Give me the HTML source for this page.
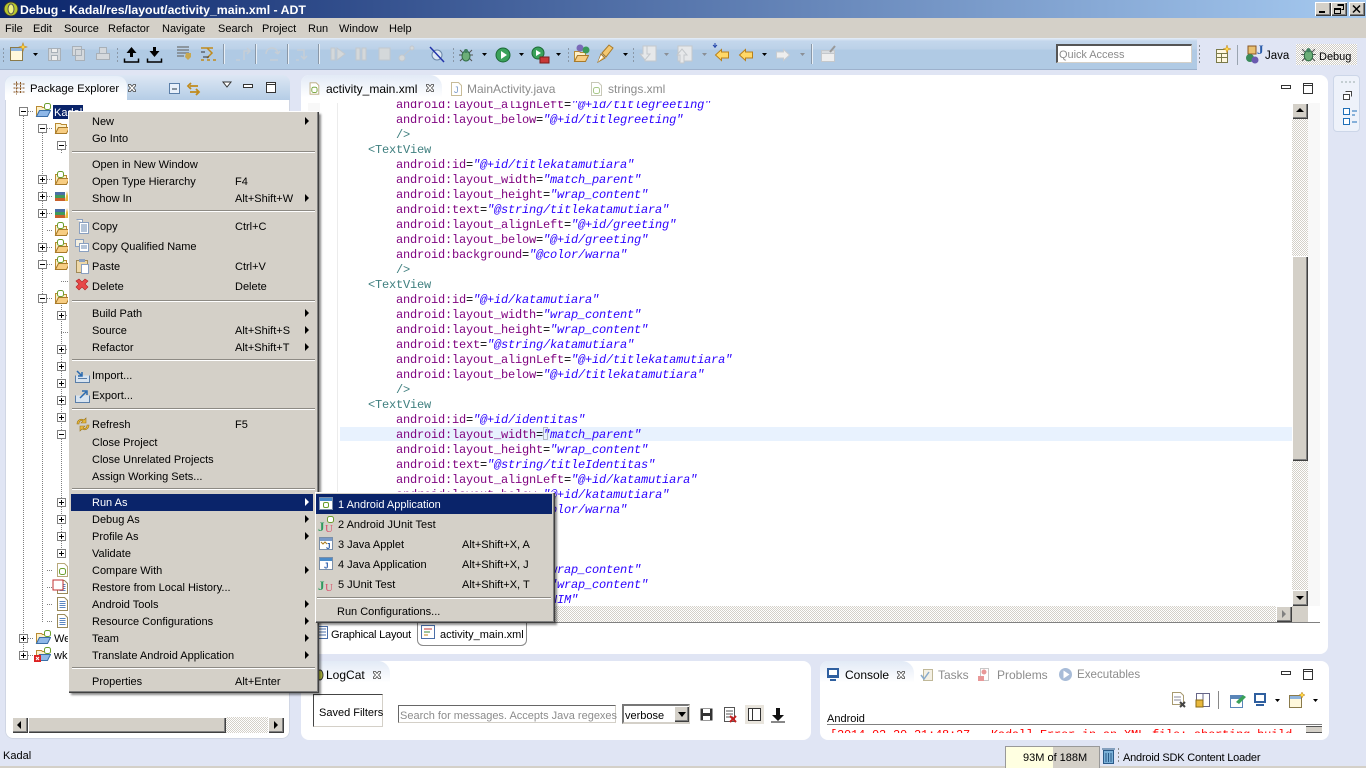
<!DOCTYPE html>
<html><head><meta charset="utf-8"><title>Debug - Kadal/res/layout/activity_main.xml - ADT</title>
<style>
html,body{margin:0;padding:0;width:1366px;height:768px;overflow:hidden;background:#e0e5f4;font-family:"Liberation Sans",sans-serif;font-size:11px;color:#000}
div,svg,span.a{position:absolute}
.t{position:absolute;white-space:nowrap;line-height:16px;height:16px;margin-top:1px}
.g{color:#8c8c8c}
.btn{background:#d4d0c8;box-shadow:inset 1px 1px #fff,inset -1px -1px #404040,inset -2px -2px #808080}
.chk{background:repeating-conic-gradient(#d4d0c8 0 25%,#fff 0 50%) 0 0/2px 2px}
.pan{background:#fff;border-radius:8px}
.sep{height:1px;background:#8d8a84;border-bottom:1px solid #fff;left:72px;width:243px}
.ar{width:0;height:0;border-left:4px solid #000;border-top:4px solid transparent;border-bottom:4px solid transparent;left:305px}
#code{left:340px;top:101px;width:952px;height:505px;overflow:hidden;font-family:"Liberation Mono",monospace;font-size:12px;letter-spacing:-.2px;line-height:15px;color:#000}
#code b{font-weight:normal;color:#7f007f}
#code i{color:#2a00ff}
#code u{text-decoration:none;color:#3f7f7f}
#code p{margin:0;height:15px;padding-left:56px;white-space:pre}
#code p.tag{padding-left:28px}
</style></head><body>

<svg width="0" height="0" style="position:absolute"><defs>
<symbol id="plus" viewBox="0 0 9 9"><rect x=".5" y=".5" width="8" height="8" fill="#fff" stroke="#808080"/><path d="M2 4.500h5M4.500 2v5" stroke="#000" fill="none"/></symbol>
<symbol id="minus" viewBox="0 0 9 9"><rect x=".5" y=".5" width="8" height="8" fill="#fff" stroke="#808080"/><path d="M2 4.500h5" stroke="#000" fill="none"/></symbol>
<symbol id="folder" viewBox="0 0 16 16"><path d="M1.500 3.500h5l1 1h5v3h-8l-3 6z" fill="#fdf0c8" stroke="#b98a32"/><path d="M1.500 13.500 4.500 7.500H15.500l-3 6z" fill="#f7cd82" stroke="#a87a2a"/></symbol>
<symbol id="pfolder" viewBox="0 0 16 16"><path d="M1.500 3.500h5l1 1h5v3h-8l-3 6z" fill="#fdf0c8" stroke="#b98a32"/><path d="M1.500 13.500 4.500 7.500H15.500l-3 6z" fill="#8fb8e8" stroke="#3a6ea8"/><rect x="9.500" y=".5" width="6" height="6" rx="2" fill="#fff" stroke="#6a9e2d"/></symbol>
<symbol id="afolder" viewBox="0 0 16 16"><path d="M1.500 3.500h5l1 1h5v3h-8l-3 6z" fill="#fdf0c8" stroke="#b98a32"/><path d="M1.500 13.500 4.500 7.500H15.500l-3 6z" fill="#f7cd82" stroke="#a87a2a"/><rect x="3.500" y=".5" width="6" height="6" rx="2" fill="#fff" stroke="#6a9e2d"/></symbol>
<symbol id="libs" viewBox="0 0 16 16"><rect x="1" y="4" width="10" height="3" fill="#4a6fa5"/><rect x="1" y="7" width="10" height="3" fill="#3f9a5a"/><rect x="1" y="10" width="10" height="3" fill="#c8602c"/><path d="M11 13 13 3l2 10z" fill="#e8b83c"/></symbol>
<symbol id="doc" viewBox="0 0 16 16"><path d="M3.500 1.500h7l3 3v10h-10z" fill="#fff" stroke="#9a8a5a"/><path d="M5.500 5.500h6M5.500 7.500h6M5.500 9.500h6M5.500 11.500h6" stroke="#5a86c0"/></symbol>
<symbol id="adoc" viewBox="0 0 16 16"><path d="M3.500 1.500h7l3 3v10h-10z" fill="#fff" stroke="#b8a87a"/><rect x="5.500" y="6.500" width="6" height="6" rx="2" fill="#fff" stroke="#6a9e2d"/></symbol>
<symbol id="drop" viewBox="0 0 7 4"><path d="M1 0h5L3.500 3z" fill="#000"/></symbol>
<symbol id="dropg" viewBox="0 0 7 4"><path d="M1 0h5L3.500 3z" fill="#8a8f96"/></symbol>
<symbol id="bug" viewBox="0 0 16 16"><path d="M2 3l3 3M14 3l-3 3M1 8h3M15 8h-3M2 14l3-3M14 14l-3-3" stroke="#555" fill="none"/><ellipse cx="8" cy="9" rx="4" ry="5" fill="#6cae78" stroke="#2f6b44"/><circle cx="8" cy="4" r="2" fill="#3f7f5f"/></symbol>
<symbol id="play" viewBox="0 0 16 16"><circle cx="8" cy="8" r="7" fill="#3aa15a" stroke="#1c6a36"/><path d="M6 4l6 4-6 4z" fill="#fff"/></symbol>
<symbol id="lback" viewBox="0 0 16 16"><path d="M7.500 2.500 1.500 8l6 5.500V11h7V5h-7z" fill="#ffd868" stroke="#b8801c"/></symbol>
<symbol id="rgray" viewBox="0 0 16 16"><path d="M8.500 2.500l6 5.500-6 5.500V11h-7V5h7z" fill="#eee" stroke="#c8ccd0"/></symbol>
<symbol id="min" viewBox="0 0 12 12"><rect x="1.500" y="3.500" width="9" height="3" fill="#fff" stroke="#333"/></symbol>
<symbol id="max" viewBox="0 0 12 12"><rect x="1.500" y=".5" width="9" height="10" fill="#fff" stroke="#333"/><path d="M1.500 2.500h9" stroke="#333"/></symbol>
<symbol id="x" viewBox="0 0 10 10"><path d="M1.500 1.500h2l1.500 2 1.500-2h2v1.500L6.500 5l2 2v1.500h-2L5 6.500l-1.500 2h-2V7l2-2-2-2z" fill="#fff" stroke="#444" stroke-width=".8"/></symbol>
<symbol id="app" viewBox="0 0 16 16"><rect x="1.500" y="1.500" width="13" height="12" fill="#fff" stroke="#7a8ea8"/><rect x="2" y="2" width="12" height="3" fill="#4a8ac8"/><rect x="5.500" y="6.500" width="5" height="5" rx="1.500" fill="#fff" stroke="#6a9e2d"/></symbol>
<symbol id="ju" viewBox="0 0 16 16"><text x="0" y="14" font-family="Liberation Serif" font-size="13" font-weight="bold" fill="#2f9a5f">J</text><text x="7" y="15" font-family="Liberation Serif" font-size="11" fill="#d8506a">U</text></symbol>
</defs></svg>

<!-- title bar -->
<div style="left:0;top:0;width:1366px;height:18px;background:linear-gradient(90deg,#0a246a,#a6caf0)"></div>
<svg style="left:3px;top:1px" width="16" height="16"><circle cx="8" cy="8" r="7" fill="#b8c82c" stroke="#333"/><ellipse cx="8" cy="8" rx="3" ry="5" fill="#f0f080" stroke="#555"/></svg>
<div class="t" style="left:20px;top:1px;color:#fff;font-weight:bold;font-size:12.300px">Debug - Kadal/res/layout/activity_main.xml - ADT</div>
<div class="btn" style="left:1315px;top:2px;width:16px;height:14px"></div><div style="left:1319px;top:11px;width:6px;height:2px;background:#000"></div>
<div class="btn" style="left:1331px;top:2px;width:16px;height:14px"></div>
<svg style="left:1331px;top:2px" width="16" height="14"><path d="M6.500 2.500h6v5h-2M6.500 3.500h6M3.500 6.500h6v5h-6zM3.500 7.500h6" fill="none" stroke="#000"/></svg>
<div class="btn" style="left:1349px;top:2px;width:16px;height:14px"></div>
<svg style="left:1349px;top:2px" width="16" height="14"><path d="M4 3.500l7 7M11 3.500l-7 7" stroke="#000" stroke-width="1.500"/></svg>

<!-- menu bar -->
<div style="left:0;top:18px;width:1366px;height:20px;background:#d4d0c8"></div>
<div class="t" style="left:5px;top:20px">File</div>
<div class="t" style="left:33px;top:20px">Edit</div>
<div class="t" style="left:64px;top:20px">Source</div>
<div class="t" style="left:108px;top:20px">Refactor</div>
<div class="t" style="left:162px;top:20px">Navigate</div>
<div class="t" style="left:218px;top:20px">Search</div>
<div class="t" style="left:262px;top:20px">Project</div>
<div class="t" style="left:308px;top:20px">Run</div>
<div class="t" style="left:339px;top:20px">Window</div>
<div class="t" style="left:389px;top:20px">Help</div>

<!-- toolbar -->
<div style="left:0;top:38px;width:1197px;height:31px;background:linear-gradient(#e6eef8 0,#c4d7ec 3px,#bcd1e8 11px,#b0cae4 12px,#b0cae4 100%);border-bottom:1px solid #9db1cc"></div>
<svg style="left:0;top:38px" width="1197" height="32">
<g stroke="#8a98a8" stroke-dasharray="2 2" fill="none"><path d="M3.500 10v16M117.500 10v16M453.500 10v16M633.500 10v16M568.500 10v16"/></g>
<g stroke="#e8eff6"><path d="M224.500 6v20M256.500 6v20M288.500 6v20M319.500 6v20M812.500 6v20"/></g>
<g stroke="#8a98a8"><path d="M223.500 6v20M255.500 6v20M287.500 6v20M318.500 6v20M811.500 6v20"/></g>
<!-- new -->
<path d="M10.500 9.500h12v13h-12z" fill="#fff8dc" stroke="#8a7a4a"/><path d="M11 10h11v3H11z" fill="#8fb4dc"/><path d="M23 5l1 3 3 1-3 1-1 3-1-3-3-1 3-1z" fill="#ffd84a" stroke="#b8801c" stroke-width=".6"/>
<use href="#drop" x="32" y="15" width="7" height="4"/>
<!-- save -->
<g fill="#d4d8dc" stroke="#a8b0b8"><path d="M48.500 10.500h12v12h-12z"/><path d="M51.500 10.500h6v4h-6zM51.500 17.500h6v5h-6z" fill="#eee"/><path d="M72.500 8.500h9v9h-9zM75.500 11.500h9v11h-9z"/><path d="M96.500 15.500h13v6h-13zM99.500 9.500h7v6h-7z"/></g>
<!-- up / down -->
<path d="M131.500 9l5 6h-3.500v4h-3v-4h-3.500z" fill="#000"/><path d="M124.500 20.500v3.500h14v-3.500" fill="none" stroke="#000" stroke-width="1.500"/>
<path d="M154.500 19l5-6h-3.500V9h-3v4h-3.500z" fill="#000"/><path d="M147.500 20.500v3.500h14v-3.500" fill="none" stroke="#000" stroke-width="1.500"/>
<path d="M177 9h12M177 12h12M177 15h12M177 18h7" stroke="#7c8186" stroke-width="1.500"/><path d="M186 15h5v4l-3 3-3-3z" fill="#c8a850"/>
<path d="M201 10h12M207 10l5 5-5 5M201 22h3M207 22h3M213 22h3" fill="none" stroke="#c08a1c" stroke-width="1.500"/><path d="M203 19h6M201 14h4" stroke="#333"/>
<!-- disabled steps -->
<g fill="none" stroke="#c6ced6" stroke-width="1.500"><path d="M236 22h4M244 22v-9h6M247 10l3 3-3 3"/><path d="M266 16a6 6 0 0 1 12 0M278 16l-3-2M278 16l2-3M270 22h8"/><path d="M297 12h7v9M301 18l3 3 3-3M296 22h3"/></g>
<g fill="#d4d8da" stroke="#c2c8ce"><path d="M331 10h4v12h-4zM337 10l8 6-8 6zM356 10h4v12h-4zM362 10h4v12h-4zM379 10h11v12h-11z"/><path d="M402 19l10-9" fill="none"/><circle cx="402" cy="20" r="3"/><circle cx="412" cy="10" r="2"/></g>
<!-- breakpoint skip -->
<ellipse cx="437" cy="17" rx="5" ry="5" fill="#dde8f4" stroke="#6a86a8"/><path d="M430 9l14 15" stroke="#2233aa" stroke-width="1.500"/>
<use href="#bug" x="458" y="9" width="16" height="16"/><use href="#drop" x="481" y="15" width="7" height="4"/>
<use href="#play" x="495" y="9" width="16" height="16"/><use href="#drop" x="518" y="15" width="7" height="4"/>
<circle cx="538" cy="15" r="6" fill="#3aa15a" stroke="#1c6a36"/><path d="M536 12l5 3-5 3z" fill="#fff"/><rect x="540" y="19" width="9" height="6" fill="#c83838" stroke="#7a1c1c"/>
<use href="#drop" x="555" y="15" width="7" height="4"/>
<use href="#folder" x="573" y="10" width="16" height="16"/><circle cx="580" cy="10" r="3.500" fill="#7a6ab8"/><circle cx="586" cy="12" r="3.500" fill="#3a9a5a"/>
<path d="M598 24l3-8 4 4zM602 15l7-8 4 3-7 9z" fill="#f4c870" stroke="#a87a2a"/><path d="M598 24l3-7 2 2z" fill="#fff"/>
<use href="#drop" x="622" y="15" width="7" height="4"/>
<g fill="#e6e8ea" stroke="#c4c8cc"><path d="M645 8h11v15h-11z"/><path d="M643 8h4v8h3l-5 6-5-6h3z"/><path d="M678 8h14v15h-14z"/><path d="M684 25h-4v-8h-3l5-6 5 6h-3z"/></g>
<use href="#dropg" x="663" y="15" width="7" height="4"/><use href="#dropg" x="701" y="15" width="7" height="4"/>
<use href="#lback" x="714" y="9" width="16" height="16"/><path d="M713 7l2 2M717 7l-2 2M715 5v5" stroke="#2244aa"/>
<use href="#lback" x="738" y="9" width="16" height="16"/><use href="#drop" x="761" y="15" width="7" height="4"/>
<use href="#rgray" x="775" y="9" width="16" height="16"/><use href="#dropg" x="799" y="15" width="7" height="4"/>
<path d="M821.500 12.500h13v11h-13z" fill="#eee" stroke="#c4c8cc"/><path d="M821.500 12.500h13v3h-13z" fill="#d8dce0" stroke="#c4c8cc"/><path d="M830 14l5-6" stroke="#999" stroke-width="2"/>
</svg>
<div style="left:1056px;top:44px;height:16px;background:#fff;border:1px solid #d4d0c8;border-top:2px solid #555;border-left:2px solid #555;box-sizing:content-box;width:133px"></div>
<div class="t g" style="left:1059px;top:46px;letter-spacing:-.05px">Quick Access</div>

<!-- perspective switcher -->
<svg style="left:1197px;top:40px" width="110" height="30">
<path d="M2.500 5v2M2.500 9v2M2.500 13v2M2.500 17v2M2.500 21v2" stroke="#8a8f96"/>
<rect x="19.500" y="9.500" width="11" height="13" fill="#fff8e0" stroke="#7a7a4a"/><path d="M19.500 13.500h11M19.500 17.500h11M24.500 13.500v9" stroke="#7a7a4a"/><path d="M30 5l1 3 3 1-3 1-1 3-1-3-3-1 3-1z" fill="#ffd84a" stroke="#b8801c" stroke-width=".5"/>
<path d="M40.500 5v20" stroke="#9aa4b0"/>
<rect x="51" y="6" width="8" height="8" fill="#e8c070" stroke="#885522"/><circle cx="53" cy="18" r="4" fill="#3a8a5a"/><circle cx="58" cy="20" r="3.500" fill="#6a5ab0"/><text x="60" y="14" font-family="Liberation Serif" font-size="13" font-weight="bold" fill="#2a5caa">J</text>
</svg>
<div class="t" style="left:1265px;top:47px;font-size:11.500px">Java</div>
<div style="left:1296px;top:44px;width:61px;height:21px;background:repeating-conic-gradient(#cfccc4 0 25%,#fff 0 50%) 0 0/2px 2px"></div>
<svg style="left:1300px;top:46px" width="17" height="17"><use href="#bug" width="17" height="17"/></svg>
<div class="t" style="left:1319px;top:48px">Debug</div>

<!-- right trim -->
<div style="left:1333px;top:75px;width:27px;height:57px;background:#eef2fa;border:1px solid #ccd6e8;border-radius:4px;box-sizing:border-box"></div>
<svg style="left:1334px;top:76px" width="26" height="54"><path d="M7 6h2M11 6h2M15 6h2M19 6h2" stroke="#9aa"/><path d="M11.500 15.500h6v5M9.500 18.500h6v5h-6z" fill="#fff" stroke="#444"/><path d="M9.500 36.500h6v6h-6zM9.500 46.500h6v6h-6z" fill="#fff" stroke="#1f6fb8" transform="translate(0 -4)"/><path d="M18 35h5M18 39h3M18 46h5" stroke="#1f6fb8"/></svg>

<!-- Package explorer -->
<div class="pan" style="left:5px;top:75px;width:285px;height:664px;box-shadow:inset 0 0 0 1px #d0d6e4"></div>
<div style="left:5px;top:75px;width:285px;height:25px;border-radius:8px 8px 0 0;background:linear-gradient(#dde7f4,#b5cde6)"></div>
<div style="left:5px;top:76px;width:122px;height:24px;border-radius:8px 10px 0 0;background:linear-gradient(#e6eef8,#fff 80%)"></div>
<svg style="left:13px;top:81px" width="12" height="14"><path d="M3.500.5v13M.5 3h11M.5 7h11M.5 11h11M7.500 1v12" stroke="#885522" stroke-dasharray="2 1" fill="none"/></svg>
<div class="t" style="left:30px;top:80px;font-size:11.300px">Package Explorer</div>
<svg style="left:127px;top:83px" width="10" height="10"><use href="#x" width="10" height="10"/></svg>
<svg style="left:168px;top:80px" width="112" height="18"><rect x="1.500" y="3.500" width="10" height="10" fill="#e8f0fa" stroke="#5a7ea8"/><path d="M4 9h5" stroke="#234"/><path d="M22 6h8M23 3l-3 3 3 3M22 12h8M28 9l3 3-3 3" fill="none" stroke="#c08a1c" stroke-width="1.800"/><path d="M55 2h8l-4 5z" fill="#fff" stroke="#333"/><use href="#min" x="74" y="1" width="12" height="12"/><use href="#max" x="97" y="2" width="12" height="12"/></svg>

<!-- tree -->
<svg style="left:5px;top:100px" width="285" height="570">
<g transform="translate(-5 -100)">
<g stroke="#808080" stroke-dasharray="1 1" fill="none"><path d="M23.500 116v540M42.500 133v489M61.500 150v4M61.500 303v251M28 111.500h6M47 128.500h6M28 638.500h6M28 655.500h6M47 179.500h6M47 196.500h6M47 213.500h6M47 230.500h6M47 247.500h6M47 264.500h6M47 298.500h6M47 570.500h6M47 587.500h6M47 604.500h6M47 621.500h6M66 145.500h3M66 315.500h3M66 349.500h3M61 281.500h8M61 332.500h8"/></g>
<use href="#minus" x="19" y="107" width="9" height="9"/><use href="#minus" x="38" y="124" width="9" height="9"/><use href="#minus" x="57" y="141" width="9" height="9"/>
<use href="#plus" x="38" y="175" width="9" height="9"/><use href="#plus" x="38" y="192" width="9" height="9"/><use href="#plus" x="38" y="209" width="9" height="9"/><use href="#plus" x="38" y="243" width="9" height="9"/><use href="#minus" x="38" y="260" width="9" height="9"/><use href="#minus" x="38" y="294" width="9" height="9"/>
<use href="#plus" x="57" y="311" width="9" height="9"/><use href="#plus" x="57" y="345" width="9" height="9"/><use href="#plus" x="57" y="362" width="9" height="9"/><use href="#plus" x="57" y="379" width="9" height="9"/><use href="#plus" x="57" y="396" width="9" height="9"/><use href="#plus" x="57" y="413" width="9" height="9"/><use href="#minus" x="57" y="430" width="9" height="9"/><use href="#plus" x="57" y="498" width="9" height="9"/><use href="#plus" x="57" y="515" width="9" height="9"/><use href="#plus" x="57" y="532" width="9" height="9"/><use href="#plus" x="57" y="549" width="9" height="9"/>
<use href="#plus" x="19" y="634" width="9" height="9"/><use href="#plus" x="19" y="651" width="9" height="9"/>
<use href="#pfolder" x="35" y="103" width="16" height="16"/><use href="#pfolder" x="35" y="630" width="16" height="16"/><use href="#pfolder" x="35" y="647" width="16" height="16"/>
<rect x="34" y="655" width="7" height="7" fill="#d22"/><path d="M36 657l3 3M39 657l-3 3" stroke="#fff"/>
<use href="#folder" x="54" y="120" width="16" height="16"/><use href="#afolder" x="54" y="171" width="16" height="16"/><use href="#libs" x="54" y="188" width="16" height="16"/><use href="#libs" x="54" y="205" width="16" height="16"/><use href="#afolder" x="54" y="222" width="16" height="16"/><use href="#afolder" x="54" y="239" width="16" height="16"/><use href="#afolder" x="54" y="256" width="16" height="16"/><use href="#afolder" x="54" y="290" width="16" height="16"/>
<use href="#adoc" x="54" y="562" width="16" height="16"/><use href="#doc" x="54" y="579" width="16" height="16"/><use href="#doc" x="54" y="596" width="16" height="16"/><use href="#doc" x="54" y="613" width="16" height="16"/>
<rect x="53" y="580" width="10" height="10" fill="#fff" stroke="#c03030"/>
</g></svg>
<div style="left:53px;top:105px;width:30px;height:14px;background:#0a246a"></div>
<div class="t" style="left:54px;top:104px;color:#fff">Kadal</div>
<div class="t" style="left:54px;top:630px">We</div>
<div class="t" style="left:54px;top:647px">wk</div>
<!-- PE scrollbar -->
<div class="chk" style="left:12px;top:717px;width:272px;height:16px"></div>
<div class="btn" style="left:12px;top:717px;width:16px;height:16px"></div><div style="left:17px;top:721px;border-right:4px solid #000;border-top:4px solid transparent;border-bottom:4px solid transparent"></div>
<div class="btn" style="left:28px;top:717px;width:198px;height:16px"></div>
<div class="btn" style="left:268px;top:717px;width:16px;height:16px"></div><div style="left:274px;top:721px;border-left:4px solid #000;border-top:4px solid transparent;border-bottom:4px solid transparent"></div>

<!-- Editor -->
<div class="pan" style="left:301px;top:75px;width:1027px;height:579px"></div>
<div style="left:301px;top:75px;width:141px;height:25px;border-radius:8px 12px 0 0;background:linear-gradient(#e2eaf6,#fff 90%)"></div>
<svg style="left:307px;top:81px" width="14" height="15"><use href="#adoc" width="14" height="15"/></svg>
<div class="t" style="left:326px;top:80px;font-size:12px">activity_main.xml</div>
<svg style="left:425px;top:83px" width="10" height="10"><use href="#x" width="10" height="10"/></svg>
<svg style="left:449px;top:81px" width="14" height="15"><path d="M2.500 1.500h7l3 3v10h-10z" fill="#fff" stroke="#c8bc98"/><text x="5" y="12" font-family="Liberation Sans" font-size="9" fill="#7a98c8">J</text></svg>
<div class="t g" style="left:467px;top:80px;font-size:12px">MainActivity.java</div>
<svg style="left:589px;top:81px" width="14" height="15"><path d="M2.500 1.500h7l3 3v10h-10z" fill="#fff" stroke="#c8c8b8"/><rect x="4.500" y="6.500" width="6" height="6" rx="2" fill="#fff" stroke="#a8c888"/></svg>
<div class="t g" style="left:608px;top:80px;font-size:12px">strings.xml</div>
<svg style="left:1280px;top:82px" width="36" height="14"><use href="#min" x="0" y="0" width="12" height="12"/><use href="#max" x="22" y="1" width="12" height="12"/></svg>
<div style="left:308px;top:103px;width:12px;height:503px;background:#f8f8f8"></div>
<div style="left:337px;top:103px;width:1px;height:503px;background:#ececec"></div>
<div style="left:1308px;top:103px;width:12px;height:503px;background:#f8f8f8"></div>
<div style="left:340px;top:427px;width:952px;height:14px;background:#e8f2fe"></div>
<div style="left:543px;top:427px;width:5px;height:13px;border:1px solid #b0b8c4;box-sizing:border-box"></div>

<div id="code">
<p style="margin-top:-3px"><b>android:layout_alignLeft</b>=<i>"@+id/titlegreeting"</i></p>
<p><b>android:layout_below</b>=<i>"@+id/titlegreeting"</i></p>
<p><u>/&gt;</u></p>
<p class="tag"><u>&lt;TextView</u></p>
<p><b>android:id</b>=<i>"@+id/titlekatamutiara"</i></p>
<p><b>android:layout_width</b>=<i>"match_parent"</i></p>
<p><b>android:layout_height</b>=<i>"wrap_content"</i></p>
<p><b>android:text</b>=<i>"@string/titlekatamutiara"</i></p>
<p><b>android:layout_alignLeft</b>=<i>"@+id/greeting"</i></p>
<p><b>android:layout_below</b>=<i>"@+id/greeting"</i></p>
<p><b>android:background</b>=<i>"@color/warna"</i></p>
<p><u>/&gt;</u></p>
<p class="tag"><u>&lt;TextView</u></p>
<p><b>android:id</b>=<i>"@+id/katamutiara"</i></p>
<p><b>android:layout_width</b>=<i>"wrap_content"</i></p>
<p><b>android:layout_height</b>=<i>"wrap_content"</i></p>
<p><b>android:text</b>=<i>"@string/katamutiara"</i></p>
<p><b>android:layout_alignLeft</b>=<i>"@+id/titlekatamutiara"</i></p>
<p><b>android:layout_below</b>=<i>"@+id/titlekatamutiara"</i></p>
<p><u>/&gt;</u></p>
<p class="tag"><u>&lt;TextView</u></p>
<p><b>android:id</b>=<i>"@+id/identitas"</i></p>
<p><b>android:layout_width</b>=<i>"match_parent"</i></p>
<p><b>android:layout_height</b>=<i>"wrap_content"</i></p>
<p><b>android:text</b>=<i>"@string/titleIdentitas"</i></p>
<p><b>android:layout_alignLeft</b>=<i>"@+id/katamutiara"</i></p>
<p><b>android:layout_below</b>=<i>"@+id/katamutiara"</i></p>
<p><b>android:background</b>=<i>"@color/warna"</i></p>
<p><u>/&gt;</u></p>
<p class="tag"><u>&lt;TextView</u></p>
<p><b>android:id</b>=<i>"@+id/nim"</i></p>
<p><b>android:layout_width</b>=<i>"wrap_content"</i></p>
<p><b>android:layout_height</b>=<i>"wrap_content"</i></p>
<p><b>android:text</b>=<i>"@string/NIM"</i></p>
</div>

<!-- editor scrollbars -->
<div class="chk" style="left:1292px;top:103px;width:16px;height:503px"></div>
<div class="btn" style="left:1292px;top:103px;width:16px;height:16px"></div><div style="left:1296px;top:108px;border-bottom:4px solid #000;border-left:4px solid transparent;border-right:4px solid transparent"></div>
<div class="btn" style="left:1292px;top:256px;width:16px;height:205px"></div>
<div class="btn" style="left:1292px;top:590px;width:16px;height:16px"></div><div style="left:1296px;top:596px;border-top:4px solid #000;border-left:4px solid transparent;border-right:4px solid transparent"></div>
<div class="chk" style="left:305px;top:606px;width:987px;height:16px"></div>
<div class="btn" style="left:1276px;top:606px;width:16px;height:16px"></div><div style="left:1282px;top:610px;border-left:4px solid #808080;border-top:4px solid transparent;border-bottom:4px solid transparent"></div>
<div style="left:1292px;top:606px;width:16px;height:16px;background:#d4d0c8"></div>
<div style="left:305px;top:622px;width:1015px;height:1px;background:#808080"></div>
<!-- bottom tabs -->
<div style="left:417px;top:622px;width:110px;height:24px;background:#fff;border:1px solid #888;border-top:none;border-radius:0 0 6px 6px;box-sizing:border-box"></div>
<svg style="left:317px;top:625px" width="12" height="15"><path d="M.5 1.500h10v12H.5z" fill="#fff" stroke="#4a6ea8"/><path d="M2 4h7M2 7h7M2 10h7" stroke="#4a6ea8"/></svg>
<div class="t" style="left:331px;top:626px;letter-spacing:-.2px">Graphical Layout</div>
<svg style="left:421px;top:625px" width="15" height="15"><rect x=".5" y=".5" width="13" height="13" fill="#fff" stroke="#4a6ea8"/><path d="M3 4h8" stroke="#c03030"/><path d="M3 7h6" stroke="#3a8a3a"/><path d="M3 10h4" stroke="#c08a1c"/></svg>
<div class="t" style="left:440px;top:626px">activity_main.xml</div>

<!-- LogCat -->
<div class="pan" style="left:301px;top:661px;width:510px;height:79px"></div>
<div style="left:301px;top:661px;width:89px;height:24px;border-radius:8px 12px 0 0;background:linear-gradient(#e2eaf6,#fff 90%)"></div>
<svg style="left:314px;top:668px" width="10" height="14"><ellipse cx="6" cy="7" rx="3" ry="5" fill="#b8c040" stroke="#333"/></svg>
<div class="t" style="left:326px;top:666px;font-size:12px">LogCat</div>
<svg style="left:372px;top:670px" width="10" height="10"><use href="#x" width="10" height="10"/></svg>
<div style="left:313px;top:694px;width:70px;height:33px;background:#fff;border:1px solid #d4d0c8;border-top:1px solid #444;border-left:1px solid #444;box-sizing:border-box"></div>
<div class="t" style="left:319px;top:704px">Saved Filters</div>
<div style="left:398px;top:705px;width:218px;height:18px;background:#fff;border:1px solid #d4d0c8;border-top:1px solid #666;border-left:1px solid #666;box-sizing:border-box"></div>
<div class="t g" style="left:400px;top:707px">Search for messages. Accepts Java regexes</div>
<div style="left:622px;top:704px;width:68px;height:20px;background:#fff;border:2px solid #777;border-right-color:#d4d0c8;border-bottom-color:#d4d0c8;box-sizing:border-box"></div>
<div class="t" style="left:625px;top:707px">verbose</div>
<div class="btn" style="left:674px;top:706px;width:15px;height:16px"></div><div style="left:678px;top:712px;border-top:5px solid #000;border-left:4px solid transparent;border-right:4px solid transparent"></div>
<svg style="left:699px;top:705px" width="90" height="20">
<rect x="1.500" y="3.500" width="12" height="12" fill="#333"/><rect x="4" y="4" width="7" height="4" fill="#fff"/><rect x="4" y="11" width="7" height="4" fill="#fff"/>
<path d="M25.500 2.500h10v14h-10zM27 6h7M27 9h7M27 12h7" fill="#fff" stroke="#555"/><path d="M31 11l6 6M37 11l-6 6" stroke="#c02020" stroke-width="2"/>
<rect x="46" y="0" width="19" height="19" fill="#e8e4dc"/><rect x="49.500" y="3.500" width="12" height="12" fill="#fff" stroke="#333"/><path d="M53.500 3.500v12" stroke="#333"/>
<path d="M77 3h4v7h4l-6 6-6-6h4z" fill="#111"/><path d="M72 17h14" stroke="#111"/>
</svg>

<!-- Console -->
<div class="pan" style="left:820px;top:661px;width:509px;height:79px"></div>
<div style="left:820px;top:661px;width:94px;height:24px;border-radius:8px 12px 0 0;background:linear-gradient(#e2eaf6,#fff 90%)"></div>
<svg style="left:826px;top:667px" width="14" height="15"><rect x="1" y="1" width="12" height="10" fill="#2f5f9f"/><rect x="3" y="3" width="8" height="5" fill="#fff"/><path d="M4 13h6" stroke="#2f5f9f" stroke-width="2"/></svg>
<div class="t" style="left:845px;top:666px;font-size:12px">Console</div>
<svg style="left:896px;top:670px" width="10" height="10"><use href="#x" width="10" height="10"/></svg>
<svg style="left:919px;top:667px" width="16" height="15"><path d="M4.500 2.500h9v11h-9z" fill="#f4f0e4" stroke="#c0b898"/><path d="M2 8l3 4 5-7" fill="none" stroke="#88aacc" stroke-width="1.500"/></svg>
<div class="t g" style="left:938px;top:666px;font-size:12px">Tasks</div>
<svg style="left:977px;top:667px" width="16" height="15"><path d="M3.500 1.500h8v12h-8z" fill="#fff" stroke="#c8c8c8"/><circle cx="7" cy="5" r="2.500" fill="#e89898"/><rect x="1" y="9" width="6" height="5" fill="#e89898"/></svg>
<div class="t g" style="left:997px;top:666px;font-size:12px">Problems</div>
<svg style="left:1058px;top:667px" width="15" height="15"><circle cx="7.500" cy="7.500" r="6.500" fill="#a8bcd8"/><path d="M5.500 3.500l6 4-6 4z" fill="#fff"/></svg>
<div class="t g" style="left:1077px;top:666px;font-size:11.600px">Executables</div>
<svg style="left:1280px;top:668px" width="36" height="14"><use href="#min" x="0" y="0" width="12" height="12"/><use href="#max" x="22" y="1" width="12" height="12"/></svg>
<svg style="left:1170px;top:691px" width="152" height="18">
<path d="M2.500 1.500h8l3 3v9h-11z" fill="#fff" stroke="#a89a70"/><path d="M4 6h7M4 9h7" stroke="#889"/><path d="M10 11l5 5M15 11l-5 5" stroke="#444" stroke-width="2"/>
<rect x="26.500" y="2.500" width="13" height="13" fill="#fff" stroke="#668"/><path d="M33 3v12" stroke="#668"/><rect x="26" y="9" width="7" height="7" fill="#e8b83c" stroke="#8a6a14"/>
<path d="M48.500 0v18" stroke="#888"/>
<rect x="60.500" y="4.500" width="12" height="12" fill="#fff" stroke="#5a86b8"/><path d="M61 5h11v3H61z" fill="#5a86b8"/><path d="M66 11l7-7 3 2-7 7z" fill="#3aa15a"/>
<rect x="84" y="2" width="12" height="10" fill="#2f5f9f"/><rect x="86" y="4" width="8" height="6" fill="#fff"/><path d="M86 14h8" stroke="#2f5f9f" stroke-width="2"/>
<use href="#drop" x="104" y="8" width="7" height="4"/>
<rect x="119.500" y="4.500" width="12" height="12" fill="#fff8dc" stroke="#8a7a4a"/><path d="M120 5h11v3h-11z" fill="#8fb4dc"/><path d="M132 1l1 2 2 1-2 1-1 2-1-2-2-1 2-1z" fill="#ffd84a" stroke="#b8801c" stroke-width=".5"/>
<use href="#drop" x="142" y="8" width="7" height="4"/>
</svg>
<div class="t" style="left:827px;top:710px">Android</div>
<div style="left:827px;top:724px;width:495px;height:1px;background:#808080"></div>
<div style="left:827px;top:725px;width:465px;height:8px;overflow:hidden"><div style="left:3px;top:3px;white-space:nowrap;font-family:'Liberation Mono',monospace;font-size:12px;letter-spacing:-.2px;line-height:14px;color:#f00">[2014-03-20 21:48:27 - Kadal] Error in an XML file: aborting build.</div></div>
<svg style="left:1306px;top:726px" width="16" height="8"><path d="M0 .5h16M0 6.500h16" stroke="#555"/><rect x="0" y="1" width="16" height="5" fill="#d4d0c8"/></svg>

<!-- status -->
<div class="t" style="left:3px;top:747px">Kadal</div>
<div style="left:0;top:766px;width:1366px;height:2px;background:#d4d0c8"></div>
<div style="left:1005px;top:746px;width:95px;height:22px;background:#d4d0c8;border:1px solid #999;border-bottom:none;box-sizing:border-box"></div>
<div style="left:1006px;top:747px;width:47px;height:21px;background:#ffffe1"></div>
<div class="t" style="left:1023px;top:749px">93M of 188M</div>
<svg style="left:1100px;top:746px" width="22" height="20"><rect x="3.500" y="4.500" width="10" height="13" fill="#7ab0d8" stroke="#2a5a88"/><path d="M2 3h13M6 7v9M8.500 7v9M11 7v9" stroke="#2a5a88"/><path d="M18.500 2v2M18.500 6v2M18.500 10v2M18.500 14v2" stroke="#888"/></svg>
<div class="t" style="left:1123px;top:749px;letter-spacing:-.2px">Android SDK Content Loader</div>

<!-- Context menu -->
<div style="left:68px;top:111px;width:250px;height:581px;background:#d4d0c8;box-shadow:inset 1px 1px #fff,inset -1px -1px #808080,1px 1px #404040,3px 3px 2px rgba(0,0,0,.45)"></div>
<div style="left:71px;top:494px;width:242px;height:17px;background:#0a246a"></div>
<div class="sep" style="top:151px"></div><div class="sep" style="top:210px"></div><div class="sep" style="top:300px"></div><div class="sep" style="top:359px"></div><div class="sep" style="top:408px"></div><div class="sep" style="top:488px"></div><div class="sep" style="top:667px"></div>

<div class="t" style="left:92px;top:113px">New</div><div class="ar a" style="top:117px"></div>
<div class="t" style="left:92px;top:130px">Go Into</div>
<div class="t" style="left:92px;top:156px">Open in New Window</div>
<div class="t" style="left:92px;top:173px">Open Type Hierarchy</div><div class="t" style="left:235px;top:173px">F4</div>
<div class="t" style="left:92px;top:190px">Show In</div><div class="t" style="left:235px;top:190px">Alt+Shift+W</div><div class="ar" style="top:194px"></div>
<div class="t" style="left:92px;top:218px">Copy</div><div class="t" style="left:235px;top:218px">Ctrl+C</div>
<div class="t" style="left:92px;top:238px">Copy Qualified Name</div>
<div class="t" style="left:92px;top:258px">Paste</div><div class="t" style="left:235px;top:258px">Ctrl+V</div>
<div class="t" style="left:92px;top:278px">Delete</div><div class="t" style="left:235px;top:278px">Delete</div>
<div class="t" style="left:92px;top:305px">Build Path</div><div class="ar" style="top:309px"></div>
<div class="t" style="left:92px;top:322px">Source</div><div class="t" style="left:235px;top:322px">Alt+Shift+S</div><div class="ar" style="top:326px"></div>
<div class="t" style="left:92px;top:339px">Refactor</div><div class="t" style="left:235px;top:339px">Alt+Shift+T</div><div class="ar" style="top:343px"></div>
<div class="t" style="left:92px;top:367px">Import...</div>
<div class="t" style="left:92px;top:387px">Export...</div>
<div class="t" style="left:92px;top:416px">Refresh</div><div class="t" style="left:235px;top:416px">F5</div>
<div class="t" style="left:92px;top:434px">Close Project</div>
<div class="t" style="left:92px;top:451px">Close Unrelated Projects</div>
<div class="t" style="left:92px;top:468px">Assign Working Sets...</div>
<div class="t" style="left:92px;top:494px;color:#fff">Run As</div><div class="ar" style="top:498px;border-left-color:#fff"></div>
<div class="t" style="left:92px;top:511px">Debug As</div><div class="ar" style="top:515px"></div>
<div class="t" style="left:92px;top:528px">Profile As</div><div class="ar" style="top:532px"></div>
<div class="t" style="left:92px;top:545px">Validate</div>
<div class="t" style="left:92px;top:562px">Compare With</div><div class="ar" style="top:566px"></div>
<div class="t" style="left:92px;top:579px">Restore from Local History...</div>
<div class="t" style="left:92px;top:596px">Android Tools</div><div class="ar" style="top:600px"></div>
<div class="t" style="left:92px;top:613px">Resource Configurations</div><div class="ar" style="top:617px"></div>
<div class="t" style="left:92px;top:630px">Team</div><div class="ar" style="top:634px"></div>
<div class="t" style="left:92px;top:647px">Translate Android Application</div><div class="ar" style="top:651px"></div>
<div class="t" style="left:92px;top:673px">Properties</div><div class="t" style="left:235px;top:673px">Alt+Enter</div>

<svg style="left:72px;top:215px" width="20" height="225">
<g transform="translate(0 -215)">
<path d="M4.500 219.500h6v3M7.500 222.500h9v11h-9z" fill="#fff" stroke="#8aa0c0"/><path d="M9 225h6M9 227h6M9 229h6M9 231h6" stroke="#6a88b0"/>
<path d="M3.500 239.500h8v7h-8z" fill="#f4efe0" stroke="#8aa0c0"/><path d="M7.500 243.500h9v8h-9z" fill="#fff" stroke="#8aa0c0"/><path d="M9 246h6M9 248h6" stroke="#6a88b0"/>
<path d="M4.500 260.500h11v12h-11z" fill="#eed8a8" stroke="#a08a58"/><rect x="7" y="259" width="6" height="3" fill="#8aa0c0"/><path d="M9.500 264.500h7v9h-7z" fill="#fff" stroke="#8aa0c0"/>
<path d="M4 281l3-2 3 3 3-3 3 2-3 3 3 3-3 3-3-3-3 3-3-3 3-3z" fill="#e84848" stroke="#b02020" stroke-width=".6"/>
<path d="M3.500 375.500v7h14v-7M6 378.500h9" fill="#d8e4f0" stroke="#5a7ea8"/><path d="M5 371l5 5M10 372v4h-4" fill="none" stroke="#2a6ab0" stroke-width="1.500"/>
<path d="M3.500 395.500v7h14v-7" fill="#d8e4f0" stroke="#5a7ea8"/><path d="M8 398l6-6M10 391h5v4" fill="none" stroke="#2a6ab0" stroke-width="1.500"/>
<path d="M5 424c0-4 4-6 7-4l2-2v5h-5l2-2c-2-1-4 0-4 3zM17 425c0 4-4 6-7 4l-2 2v-5h5l-2 2c2 1 4 0 4-3z" fill="#e8b83c" stroke="#9a7418" stroke-width=".6"/>
</g></svg>

<!-- Submenu -->
<div style="left:315px;top:492px;width:239px;height:130px;background:#d4d0c8;box-shadow:inset 1px 1px #fff,inset -1px -1px #808080,1px 1px #404040,3px 3px 2px rgba(0,0,0,.45)"></div>
<div style="left:316px;top:494px;width:236px;height:20px;background:#0a246a"></div>
<svg style="left:318px;top:496px" width="16" height="16"><use href="#app" width="16" height="16"/></svg>
<svg style="left:318px;top:516px" width="18" height="17"><use href="#ju" y="1" width="16" height="16"/><rect x="9.500" y=".5" width="6" height="6" rx="2" fill="#fff" stroke="#6a9e2d"/></svg>
<svg style="left:318px;top:536px" width="16" height="16"><rect x="1.500" y="1.500" width="13" height="12" fill="#fff" stroke="#7a8ea8"/><rect x="2" y="2" width="12" height="3" fill="#7a9ac8"/><path d="M3 6l2 2 2-2 2 2" stroke="#a8781c" fill="none"/><text x="8" y="13" font-family="Liberation Sans" font-weight="bold" font-size="8" fill="#2a5caa">J</text></svg>
<svg style="left:318px;top:556px" width="16" height="16"><rect x="1.500" y="1.500" width="13" height="12" fill="#fff" stroke="#7a8ea8"/><rect x="2" y="2" width="12" height="3" fill="#4a8ac8"/><text x="6" y="12.500" font-family="Liberation Sans" font-weight="bold" font-size="8" fill="#2a5caa">J</text></svg>
<svg style="left:318px;top:576px" width="16" height="16"><use href="#ju" width="16" height="16"/></svg>
<div class="t" style="left:338px;top:496px;color:#fff">1 Android Application</div>
<div class="t" style="left:338px;top:516px">2 Android JUnit Test</div>
<div class="t" style="left:338px;top:536px">3 Java Applet</div><div class="t" style="left:462px;top:536px">Alt+Shift+X, A</div>
<div class="t" style="left:338px;top:556px">4 Java Application</div><div class="t" style="left:462px;top:556px">Alt+Shift+X, J</div>
<div class="t" style="left:338px;top:576px">5 JUnit Test</div><div class="t" style="left:462px;top:576px">Alt+Shift+X, T</div>
<div style="left:317px;top:597px;width:234px;height:1px;background:#8d8a84;border-bottom:1px solid #fff"></div>
<div class="t" style="left:337px;top:603px">Run Configurations...</div>
</body></html>
